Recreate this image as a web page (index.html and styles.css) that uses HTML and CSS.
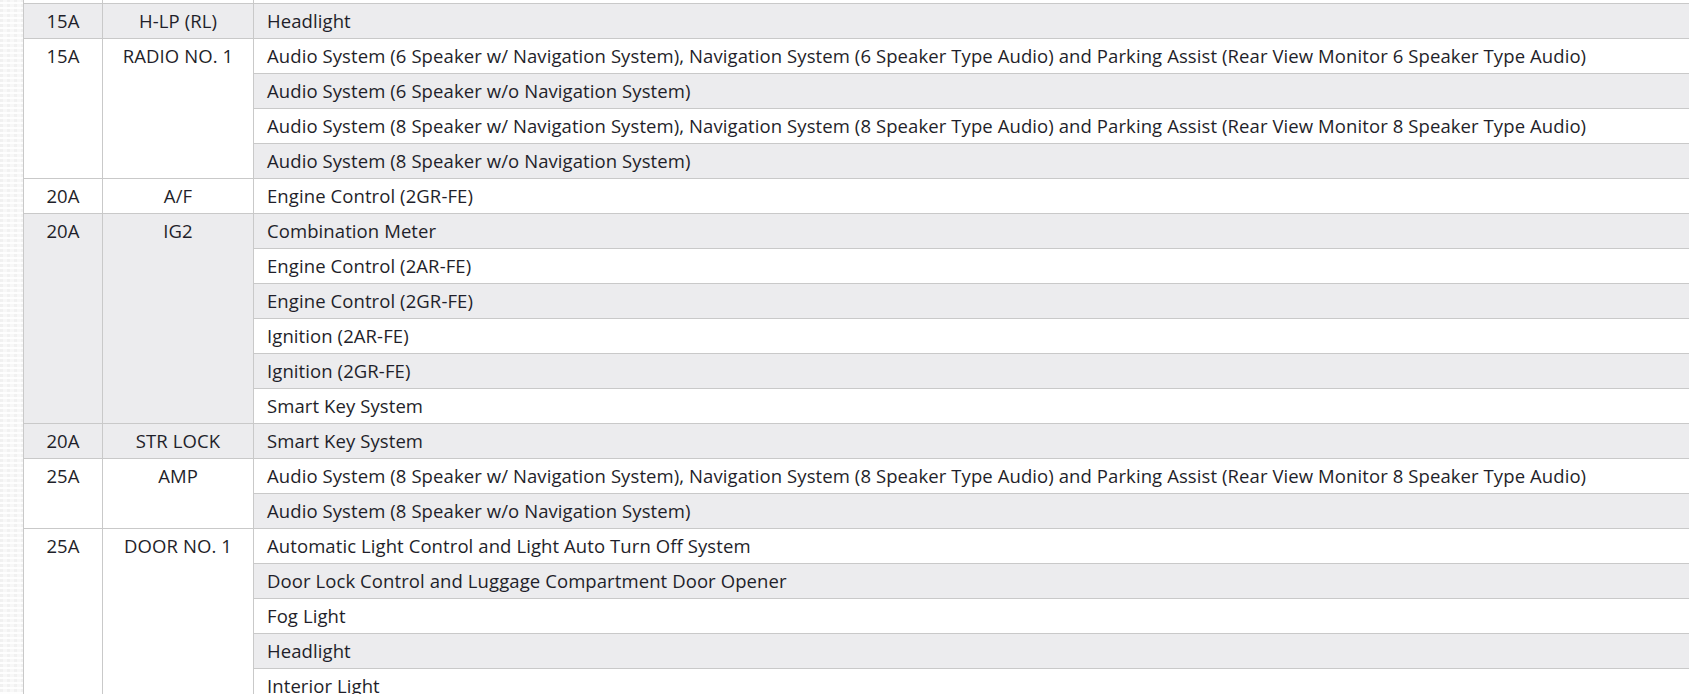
FILE: index.html
```html
<!DOCTYPE html>
<html lang="en">
<head>
<meta charset="utf-8">
<title>Fuse table</title>
<link rel="stylesheet" href="styles.css">
</head>
<body>
<div class="page">
  <div class="texture"></div>
  <div class="content">
    <table class="fuses">
      <colgroup>
        <col class="c-amp">
        <col class="c-name">
        <col class="c-circuit">
      </colgroup>
      <tbody>
        <tr class="w prev"><td></td><td></td><td></td></tr>
        <tr class="g"><td class="ctr">15A</td><td class="ctr">H-LP (RL)</td><td>Headlight</td></tr>
        <tr class="w"><td class="ctr" rowspan="4">15A</td><td class="ctr" rowspan="4">RADIO NO. 1</td><td>Audio System (6 Speaker w/ Navigation System), Navigation System (6 Speaker Type Audio) and Parking Assist (Rear View Monitor 6 Speaker Type Audio)</td></tr>
        <tr class="g"><td>Audio System (6 Speaker w/o Navigation System)</td></tr>
        <tr class="w"><td>Audio System (8 Speaker w/ Navigation System), Navigation System (8 Speaker Type Audio) and Parking Assist (Rear View Monitor 8 Speaker Type Audio)</td></tr>
        <tr class="g"><td>Audio System (8 Speaker w/o Navigation System)</td></tr>
        <tr class="w"><td class="ctr">20A</td><td class="ctr">A/F</td><td>Engine Control (2GR-FE)</td></tr>
        <tr class="g"><td class="ctr" rowspan="6">20A</td><td class="ctr" rowspan="6">IG2</td><td>Combination Meter</td></tr>
        <tr class="w"><td>Engine Control (2AR-FE)</td></tr>
        <tr class="g"><td>Engine Control (2GR-FE)</td></tr>
        <tr class="w"><td>Ignition (2AR-FE)</td></tr>
        <tr class="g"><td>Ignition (2GR-FE)</td></tr>
        <tr class="w"><td>Smart Key System</td></tr>
        <tr class="g"><td class="ctr">20A</td><td class="ctr">STR LOCK</td><td>Smart Key System</td></tr>
        <tr class="w"><td class="ctr" rowspan="2">25A</td><td class="ctr" rowspan="2">AMP</td><td>Audio System (8 Speaker w/ Navigation System), Navigation System (8 Speaker Type Audio) and Parking Assist (Rear View Monitor 8 Speaker Type Audio)</td></tr>
        <tr class="g"><td>Audio System (8 Speaker w/o Navigation System)</td></tr>
        <tr class="w"><td class="ctr" rowspan="5">25A</td><td class="ctr" rowspan="5">DOOR NO. 1</td><td>Automatic Light Control and Light Auto Turn Off System</td></tr>
        <tr class="g"><td>Door Lock Control and Luggage Compartment Door Opener</td></tr>
        <tr class="w"><td>Fog Light</td></tr>
        <tr class="g"><td>Headlight</td></tr>
        <tr class="w"><td>Interior Light</td></tr>
      </tbody>
    </table>
  </div>
</div>
</body>
</html>
```

FILE: styles.css
```css
html, body {
  margin: 0;
  padding: 0;
  overflow: hidden;
  background: #ffffff;
}

.page {
  display: flex;
  width: 1720px;
  height: 694px;
  overflow: hidden;
}

.texture {
  flex: 0 0 23px;
  background-color: #f8f8f8;
  background-image:
    repeating-linear-gradient(0deg, rgba(255,255,255,0.9) 0 2px, transparent 2px 5px),
    repeating-linear-gradient(90deg, rgba(236,236,236,0.6) 0 3px, transparent 3px 7px);
}

.content {
  flex: 1 1 auto;
  margin-top: -31px;
}

.fuses {
  border-collapse: collapse;
  table-layout: fixed;
  width: 1690px;
  font-family: "Open Sans", "Noto Sans", sans-serif;
  font-size: 18.5px;
  font-weight: 370;
  letter-spacing: 0.09px;
  color: #1f1f2a;
}

.c-amp { width: 79px; }
.c-name { width: 151px; }

.fuses td {
  border: 1px solid #c9c9c9;
  height: 34px;
  box-sizing: border-box;
  padding: 6px 13px 7px;
  line-height: 21px;
  vertical-align: top;
  white-space: nowrap;
  text-align: left;
}

.fuses td.ctr {
  text-align: center;
  padding-left: 4px;
  padding-right: 4px;
}

.fuses tr.g td { background: #ececee; }
.fuses tr.w td { background: #ffffff; }
```
